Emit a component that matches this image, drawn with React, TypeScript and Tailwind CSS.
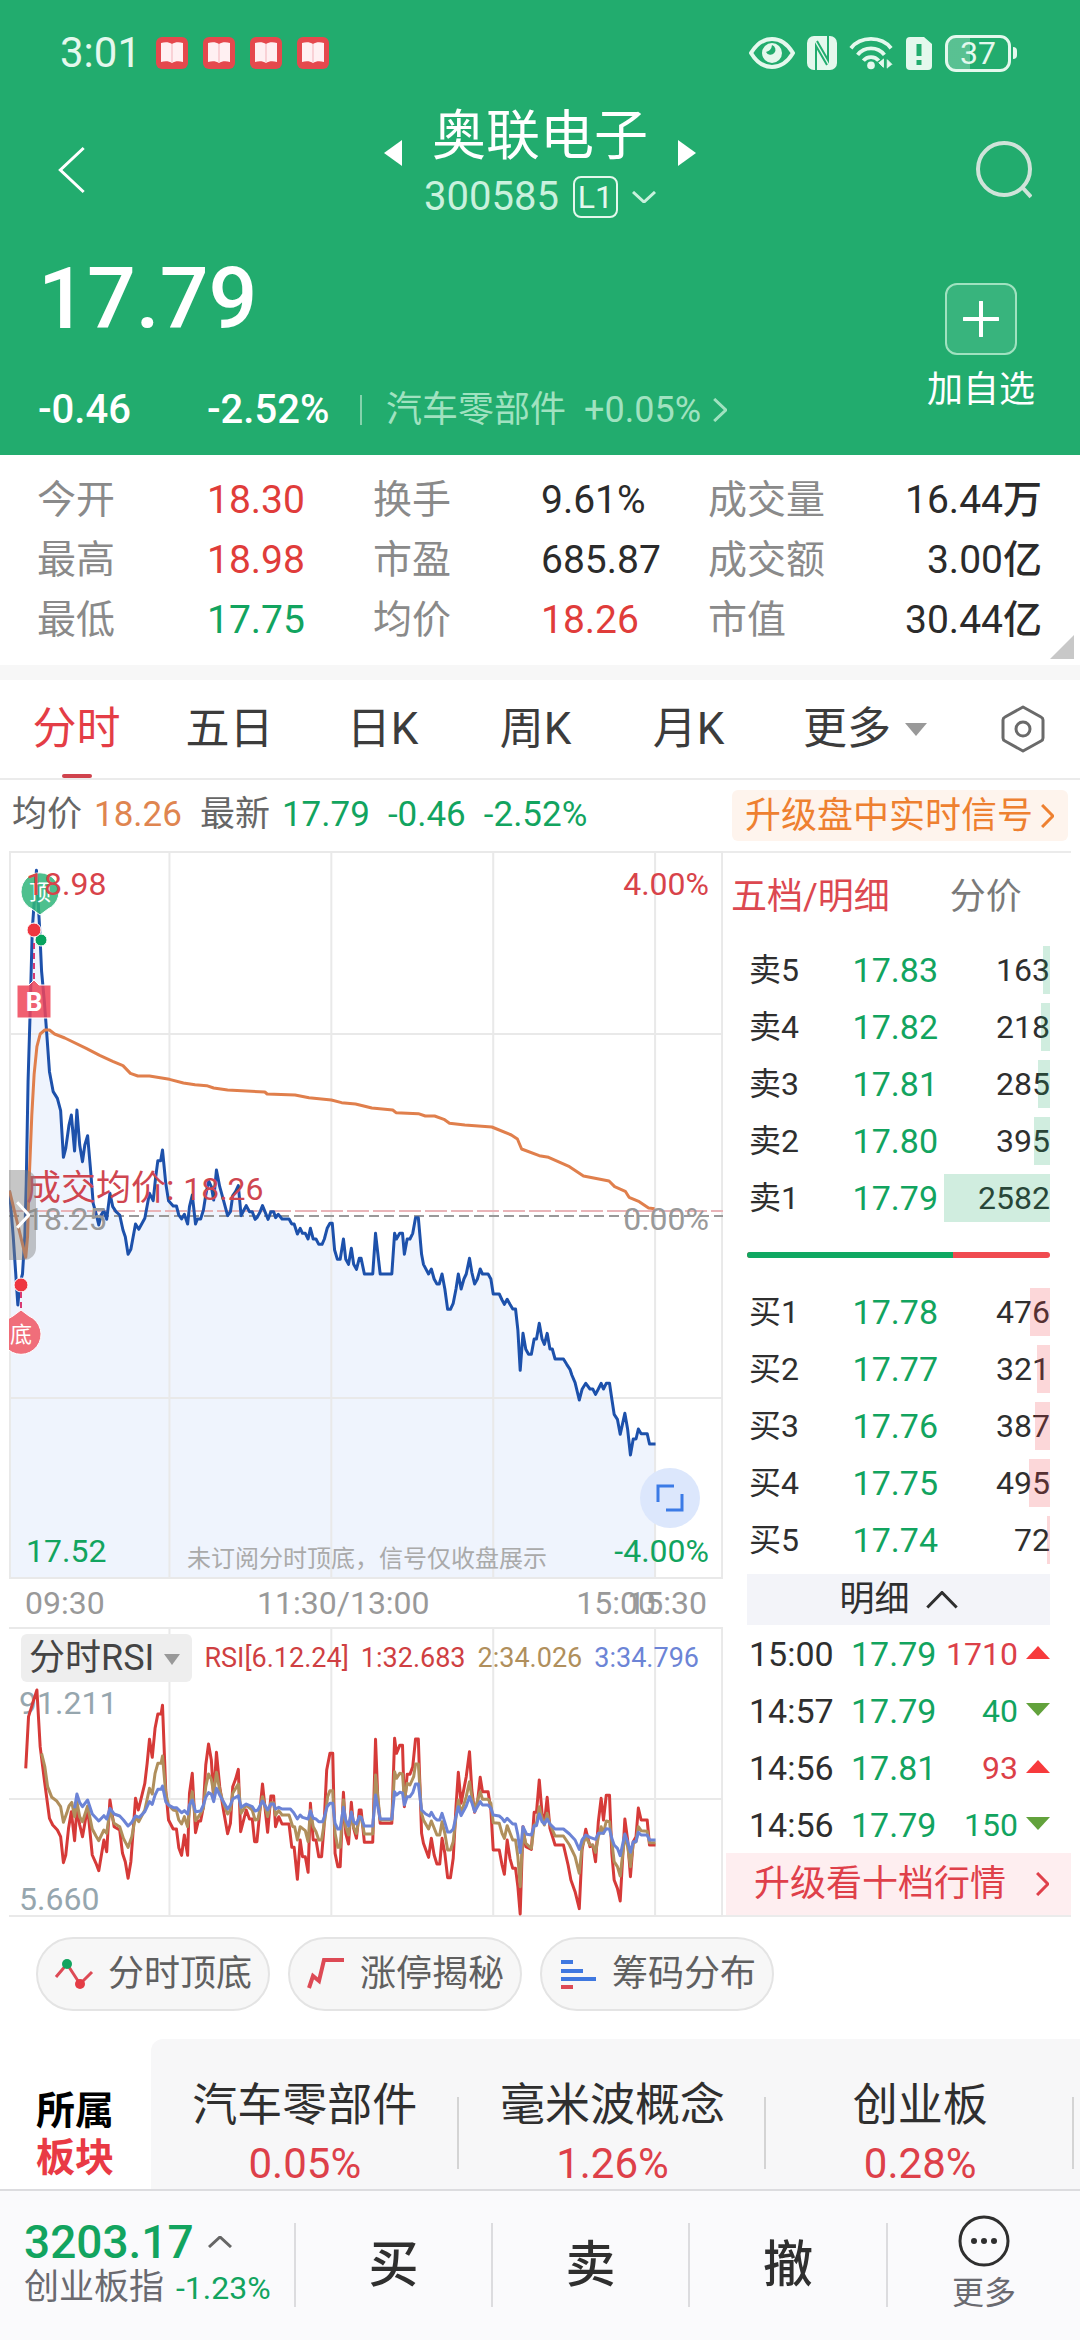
import type { ReactNode } from "react";

const PRICE =
  "21,1019 29,1155 34,1258 39,1362 43,1300 49,1269 54,1155 57,1000 61,690 65,504 70,236 79,58 86,236 90,360 96,452 101,545 107,662 115,722 124,742 131,779 137,919 142,892 149,822 154,792 161,900 166,777 172,882 178,932 183,882 189,854 196,967 201,1057 207,1087 213,1122 218,1092 224,1079 230,1105 237,1027 243,1067 250,1082 258,1092 265,1137 270,1157 276,1210 282,1195 292,1119 299,1135 312,1102 322,1027 330,1049 335,982 340,929 346,929 350,897 357,997 363,1049 373,1065 380,1065 385,1092 391,1104 397,1090 404,1119 408,1067 414,1032 421,1119 425,1104 432,1104 438,1077 443,1032 449,989 455,1007 460,1047 466,957 473,1007 480,1042 490,1094 496,1082 501,1034 507,1022 513,1004 519,1094 525,1077 530,1064 537,1082 543,1082 549,1105 553,1100 560,1082 565,1064 577,1105 583,1082 589,1082 593,1100 599,1090 607,1104 622,1104 628,1119 633,1119 640,1149 646,1132 651,1147 657,1147 663,1164 668,1132 674,1164 680,1164 686,1180 693,1180 698,1164 704,1132 710,1117 715,1117 720,1197 726,1225 732,1225 739,1164 744,1225 750,1240 756,1192 761,1240 767,1255 773,1222 777,1222 784,1269 802,1269 808,1147 818,1269 843,1269 849,1147 853,1164 860,1147 866,1147 870,1210 876,1164 882,1164 888,1147 894,1100 900,1100 907,1210 911,1240 922,1269 928,1254 934,1284 940,1299 945,1299 951,1269 957,1314 963,1375 969,1375 975,1357 981,1314 986,1269 992,1314 998,1284 1003,1269 1010,1222 1015,1264 1021,1299 1027,1284 1033,1254 1038,1269 1050,1269 1056,1284 1061,1329 1074,1329 1080,1347 1085,1360 1091,1345 1097,1360 1103,1374 1109,1374 1114,1437 1119,1558 1125,1447 1131,1495 1137,1510 1143,1510 1149,1464 1154,1464 1160,1417 1166,1464 1171,1480 1177,1447 1183,1494 1188,1494 1194,1524 1212,1524 1219,1540 1226,1555 1230,1572 1237,1595 1246,1647 1252,1615 1260,1597 1269,1614 1275,1614 1281,1630 1287,1614 1293,1597 1298,1614 1304,1597 1311,1597 1316,1644 1321,1690 1328,1705 1334,1750 1344,1687 1350,1735 1356,1812 1362,1764 1368,1764 1373,1734 1379,1748 1392,1748 1397,1779 1410,1779";

const AVERAGE =
  "21,1019 56,1219 60,1155 63,1000 69,793 74,670 80,587 87,549 97,537 107,537 118,549 140,561 186,592 215,613 243,631 265,644 281,667 297,675 322,675 365,685 395,696 420,701 445,704 460,711 490,717 570,723 575,729 635,732 665,740 713,747 735,755 765,759 800,771 845,777 852,785 900,788 915,795 935,795 955,805 967,817 1000,822 1058,828 1100,852 1113,864 1122,894 1160,914 1180,919 1225,947 1255,975 1310,990 1322,1007 1345,1021 1353,1039 1375,1052 1395,1071 1408,1073";

const RSI_6 =
  "56,445 62,290 72,245 80,210 87,380 96,480 107,595 114,615 124,630 131,650 137,728 142,705 148,625 154,575 161,662 166,565 172,615 178,650 189,562 199,705 207,730 213,752 224,660 230,695 237,540 246,620 258,630 264,700 270,725 276,775 282,725 292,535 298,570 312,490 317,430 322,358 328,412 334,325 340,282 347,282 350,256 357,510 363,600 373,627 380,627 385,683 391,706 397,645 404,706 408,520 414,460 421,638 427,603 432,603 438,560 443,435 449,372 455,420 460,535 466,397 473,500 481,570 490,641 496,610 501,500 507,478 513,448 518,635 530,570 537,597 543,597 548,665 553,665 565,492 576,637 583,528 589,528 593,620 600,590 607,612 622,612 628,682 633,682 640,778 646,660 651,710 657,710 663,757 668,550 674,660 680,660 686,710 692,710 697,625 703,450 710,400 716,400 721,700 727,740 732,740 739,517 744,640 750,672 756,547 761,625 767,655 773,570 777,570 784,667 802,667 808,358 813,540 818,610 843,610 849,355 853,400 860,376 866,376 870,560 876,463 882,463 888,440 894,357 900,357 907,640 911,670 922,712 928,655 934,705 940,732 946,732 951,655 957,700 963,773 969,773 975,715 981,560 986,457 992,550 1003,470 1010,395 1015,510 1021,577 1027,550 1033,472 1038,515 1050,515 1056,570 1061,690 1074,690 1080,735 1085,763 1091,660 1097,715 1103,745 1109,745 1114,800 1119,882 1125,620 1131,680 1143,688 1149,577 1154,577 1160,480 1166,580 1171,610 1177,532 1183,625 1194,675 1212,675 1222,735 1228,780 1237,815 1246,866 1252,690 1260,628 1269,680 1275,675 1281,725 1287,605 1293,535 1298,600 1304,526 1311,526 1316,700 1321,780 1328,805 1334,843 1344,597 1350,660 1356,770 1362,665 1368,650 1373,564 1379,600 1392,600 1397,675 1410,675";

const RSI_12 =
  "90,400 97,440 103,500 112,532 122,542 131,560 137,607 144,580 149,558 155,547 161,590 166,545 172,590 178,605 189,558 199,627 207,648 213,662 224,630 230,640 237,570 246,610 258,620 266,655 276,682 284,650 292,590 299,605 312,570 322,505 328,522 334,460 340,430 347,430 350,408 357,520 363,555 373,570 380,572 385,600 391,612 397,590 404,620 410,545 414,515 421,602 430,585 438,565 443,500 449,462 455,478 460,520 466,457 473,510 481,550 490,582 496,570 501,520 513,492 519,580 530,555 543,570 549,600 555,598 565,530 576,590 583,548 589,548 593,585 600,572 607,585 622,585 630,620 634,620 640,660 646,620 657,632 663,665 668,570 674,620 680,635 686,660 692,660 700,590 705,530 710,512 716,512 721,640 727,682 732,682 739,540 744,620 750,645 756,575 761,622 767,640 773,590 777,590 784,642 802,642 808,465 818,600 843,600 849,455 853,475 860,460 866,462 870,540 876,490 882,495 890,470 894,432 900,432 907,580 911,600 922,627 928,603 940,645 946,645 951,605 957,640 963,690 969,690 975,665 981,590 986,540 992,580 1003,530 1010,485 1015,530 1021,570 1033,515 1038,538 1050,538 1056,550 1061,608 1074,610 1080,640 1085,655 1091,617 1103,660 1109,660 1114,710 1119,800 1125,632 1131,670 1143,685 1149,615 1154,610 1160,560 1166,595 1171,615 1177,580 1183,612 1194,648 1212,648 1225,675 1237,710 1246,760 1252,680 1260,650 1269,675 1275,675 1281,697 1287,650 1293,620 1298,640 1304,603 1311,605 1316,665 1321,725 1328,740 1334,768 1344,645 1350,680 1356,740 1362,670 1368,665 1373,620 1379,632 1392,634 1397,668 1410,668";

const RSI_24 =
  "161,565 166,522 172,548 178,560 189,540 199,582 213,603 224,587 230,597 237,565 246,582 258,588 266,600 276,618 284,607 292,588 300,592 312,575 322,545 328,553 334,525 340,508 347,508 350,498 357,545 363,555 373,563 380,563 391,578 397,572 404,582 408,555 414,540 421,575 432,573 438,555 443,532 449,518 455,522 460,545 466,505 473,525 481,545 490,567 496,555 501,537 513,527 519,562 530,552 543,560 549,573 555,570 565,543 576,570 583,552 589,552 593,567 600,562 607,567 625,567 632,578 640,597 646,585 651,592 663,597 668,573 674,595 680,597 686,605 694,605 698,590 704,560 710,550 716,550 721,610 727,627 732,627 739,562 744,600 750,618 756,577 761,605 767,612 773,590 777,592 784,618 802,618 808,525 813,560 818,597 843,597 849,515 853,525 860,517 866,519 870,555 876,530 882,530 888,518 894,492 900,492 907,570 916,582 924,588 928,577 934,592 940,600 946,600 951,580 957,607 963,636 969,636 975,627 981,590 986,560 992,587 1003,558 1010,530 1015,548 1021,575 1033,545 1038,555 1050,555 1056,565 1061,585 1074,588 1080,595 1085,605 1091,595 1103,612 1109,612 1114,645 1119,698 1125,620 1133,643 1143,645 1149,617 1154,617 1160,582 1166,605 1171,612 1177,597 1183,612 1194,627 1212,627 1225,642 1237,660 1246,688 1252,660 1260,645 1269,652 1281,658 1287,640 1298,640 1304,626 1311,628 1316,655 1321,675 1328,685 1334,707 1344,642 1350,665 1356,697 1362,665 1368,665 1373,637 1379,645 1392,645 1397,660 1410,660";

const STATS = [
  ["今开", "18.30", "text-[#e03c3a]", "换手", "9.61%", "text-[#2b2b2b]", "成交量", "16.44万"],
  ["最高", "18.98", "text-[#e03c3a]", "市盈", "685.87", "text-[#2b2b2b]", "成交额", "3.00亿"],
  ["最低", "17.75", "text-[#12a45f]", "均价", "18.26", "text-[#e03c3a]", "市值", "30.44亿"],
];

const TABS = ["分时", "五日", "日K", "周K", "月K"];

const SELLS = [
  { label: "卖5", price: "17.83", volume: 163, bar: 7 },
  { label: "卖4", price: "17.82", volume: 218, bar: 9 },
  { label: "卖3", price: "17.81", volume: 285, bar: 12 },
  { label: "卖2", price: "17.80", volume: 395, bar: 16 },
  { label: "卖1", price: "17.79", volume: 2582, bar: 106 },
];

const BUYS = [
  { label: "买1", price: "17.78", volume: 476, bar: 20 },
  { label: "买2", price: "17.77", volume: 321, bar: 13 },
  { label: "买3", price: "17.76", volume: 387, bar: 15 },
  { label: "买4", price: "17.75", volume: 495, bar: 21 },
  { label: "买5", price: "17.74", volume: 72, bar: 3 },
];

const TRADES = [
  { time: "15:00", price: "17.79", volume: 1710, up: true },
  { time: "14:57", price: "17.79", volume: 40, up: false },
  { time: "14:56", price: "17.81", volume: 93, up: true },
  { time: "14:56", price: "17.79", volume: 150, up: false },
];

const SECTORS = [
  { name: "汽车零部件", change: "0.05%" },
  { name: "毫米波概念", change: "1.26%" },
  { name: "创业板", change: "0.28%" },
];

function Chevron({ d, className }: { d: string; className: string }) {
  return (
    <svg viewBox="0 0 24 24" preserveAspectRatio="none" fill="none" stroke="currentColor" className={className} aria-hidden="true">
      <path d={d} strokeWidth="3" vectorEffect="non-scaling-stroke" />
    </svg>
  );
}

const RIGHT = "M2 1l20 11L2 23";
const LEFT = "M22 1L2 12l20 11";
const UP = "M1 22L12 2l11 20";
const DOWN = "M1 2l11 20L23 2";

function BookIcon() {
  return (
    <svg viewBox="0 0 32 32" className="h-8 w-8" aria-hidden="true">
      <rect width="32" height="32" rx="6" fill="#e5484d" />
      <path d="M5 6c4-1 8-1 11 1 3-2 7-2 11-1v19c-4-1-8-1-11 1-3-2-7-2-11-1z" fill="#fff0f2" />
      <path d="M16 7v18" stroke="#f3b3ba" strokeWidth="1" />
    </svg>
  );
}

function StatusBar() {
  return (
    <div className="flex h-[106px] items-center justify-between pr-[63px] pl-[60px] text-[#e4f8ed]">
      <div className="flex items-center gap-[15px]">
        <span className="text-[42px] leading-none">3:01</span>
        <BookIcon />
        <BookIcon />
        <BookIcon />
        <BookIcon />
      </div>
      <div className="flex items-center gap-3">
        <svg viewBox="0 0 46 34" className="h-[34px] w-[46px]" aria-hidden="true">
          <path d="M2 17C8 7 15 3 23 3s15 4 21 14c-6 10-13 14-21 14S8 27 2 17z" fill="none" stroke="currentColor" strokeWidth="4" />
          <circle cx="23" cy="17" r="10" fill="currentColor" />
          <path d="M23 9a5 5 0 1 1-6 7 8 8 0 0 0 6-7z" fill="#22ac6e" />
        </svg>
        <svg viewBox="0 0 30 34" className="h-[34px] w-[30px]" aria-hidden="true">
          <rect width="30" height="34" rx="7" fill="currentColor" />
          <path d="M9 34V10l11 19M21 0v24L10 5" fill="none" stroke="#22ac6e" strokeWidth="2" />
        </svg>
        <svg viewBox="0 0 46 34" className="h-[34px] w-[44px]" aria-hidden="true">
          <g fill="none" stroke="currentColor" strokeWidth="4">
            <path d="M2 12C12-1 34-1 44 12" />
            <path d="M9 19c7-9 21-9 28 0" />
            <path d="M15 25c4-5 12-5 16 0" />
          </g>
          <circle cx="23" cy="30" r="4" fill="currentColor" />
          <path d="M36 23v9l-5-5M40 33v-9l5 5" fill="currentColor" stroke="currentColor" />
        </svg>
        <svg viewBox="0 0 28 34" className="h-[34px] w-[28px]" aria-hidden="true">
          <path d="M5 1h14l8 7v22q0 4-4 4H5q-4 0-4-4V5q0-4 4-4z" fill="currentColor" />
          <path d="M14 8v12M14 24v5" stroke="#22ac6e" strokeWidth="5" />
        </svg>
        <div className="flex items-center gap-[2px]">
          <span className="flex h-[37px] w-[66px] items-center justify-center rounded-[11px] border-3 border-current bg-linear-to-r from-white/25 from-37% to-transparent to-37% text-[32px] leading-none">
            37
          </span>
          <span className="h-3 w-1 rounded-r bg-current" />
        </div>
      </div>
    </div>
  );
}

function Header() {
  return (
    <header className="bg-[#22ac6e] text-white">
      <StatusBar />
      <div className="flex h-[128px] items-center justify-between pr-12 pl-[58px]">
        <button type="button" aria-label="返回" className="w-[46px]">
          <Chevron d={LEFT} className="h-12 w-7" />
        </button>
        <div className="flex items-start gap-5 self-stretch">
          <button type="button" aria-label="上一只" className="mt-[34px]">
            <svg viewBox="0 0 18 26" className="h-[26px] w-[18px]" fill="currentColor"><path d="M18 0v26L0 13z" /></svg>
          </button>
          <div className="flex w-[236px] flex-col items-center">
            <h1 className="text-[54px] leading-[62px] whitespace-nowrap">奥联电子</h1>
            <div className="flex h-[58px] items-center gap-[14px] text-[#c9f1dd]">
              <span className="text-[40px] leading-none">300585</span>
              <span className="flex h-[42px] w-[45px] items-center justify-center rounded-lg border-2 border-[#e4f8ed] text-[32px] leading-none text-[#e4f8ed]">L1</span>
              <Chevron d={DOWN} className="h-3 w-6" />
            </div>
          </div>
          <button type="button" aria-label="下一只" className="mt-[34px]">
            <svg viewBox="0 0 18 26" className="h-[26px] w-[18px]" fill="currentColor"><path d="M0 0v26l18-13z" /></svg>
          </button>
        </div>
        <button type="button" aria-label="搜索">
          <svg viewBox="0 0 56 58" className="h-[58px] w-[56px]" fill="none" stroke="#cfe3d9" strokeWidth="4" aria-hidden="true">
            <circle cx="28" cy="28" r="26" />
            <path d="M46 46l9 10" />
          </svg>
        </button>
      </div>
      <div className="flex items-start justify-between pr-[45px] pb-[21px] pl-[38px]">
        <div className="pt-5">
          <div className="text-[86px] leading-[90px] font-medium">17.79</div>
          <div className="mt-[42px] flex h-12 items-center text-[40px] leading-[48px] font-medium">
            <span className="w-[169px]">-0.46</span>
            <span className="w-[153px]">-2.52%</span>
            <span className="h-[30px] w-[2px] bg-[#85d3ac]" />
            <a href="#sector" className="ml-6 flex items-center text-[36px] font-normal text-[#a0e2c0]">
              <span>汽车零部件</span>
              <span className="mr-3 ml-[18px]">+0.05%</span>
              <Chevron d={RIGHT} className="h-6 w-[14px]" />
            </a>
          </div>
        </div>
        <button type="button" className="flex flex-col items-center pt-[49px]">
          <span className="flex h-[72px] w-[72px] items-center justify-center rounded-xl border-2 border-[#a0e2c0] bg-white/10">
            <svg viewBox="0 0 36 36" className="h-9 w-9" stroke="currentColor" strokeWidth="4" strokeLinecap="round"><path d="M18 1v34M1 18h34" /></svg>
          </span>
          <span className="mt-[11px] text-[36px] leading-[48px]">加自选</span>
        </button>
      </div>
    </header>
  );
}

function Stats() {
  return (
    <section className="relative bg-white py-[15px] pr-[38px] pl-[37px]">
      <dl className="grid grid-cols-[170px_166px_168px_167px_auto_1fr] text-[39px] leading-[60px] whitespace-nowrap">
        {STATS.map(([a, av, ac, b, bv, bc, c, cv]) => (
          <div key={a} className="contents">
            <dt className="text-[#8a8a8a]">{a}</dt>
            <dd className={"font-[450] " + ac}>{av}</dd>
            <dt className="text-[#8a8a8a]">{b}</dt>
            <dd className={"font-[450] " + bc}>{bv}</dd>
            <dt className="text-[#8a8a8a]">{c}</dt>
            <dd className="text-right font-[450] text-[#2b2b2b]">{cv}</dd>
          </div>
        ))}
      </dl>
      <svg viewBox="0 0 24 24" className="absolute right-[6px] bottom-[6px] h-6 w-6" fill="#c8c8c8" aria-hidden="true"><path d="M24 0v24H0z" /></svg>
    </section>
  );
}

function Tabs() {
  return (
    <nav className="grid h-[100px] grid-cols-[repeat(5,153fr)_200fr_115fr] border-b-2 border-[#ebebeb] text-[44px] text-[#3c3c3c]">
      {TABS.map((tab, i) => (
        <button key={tab} type="button" className={"relative " + (i === 0 ? "text-[#e43d46]" : "")}>
          {tab}
          {i === 0 && <span className="absolute bottom-0 left-1/2 h-[4px] w-[30px] -translate-x-1/2 rounded bg-[#d0434d]" />}
        </button>
      ))}
      <button type="button" className="flex items-center justify-center gap-[14px]">
        更多
        <svg viewBox="0 0 22 13" className="h-[13px] w-[22px]" fill="#999"><path d="M0 0h22L11 13z" /></svg>
      </button>
      <button type="button" aria-label="设置" className="flex items-center justify-center">
        <svg viewBox="0 0 44 48" className="h-12 w-11" fill="none" stroke="#6a6a6a" strokeWidth="3" strokeLinejoin="round">
          <path d="M22 2l18 10q2 1 2 3v18q0 2-2 3L22 46 4 36q-2-1-2-3V15q0-2 2-3z" />
          <circle cx="22" cy="24" r="7" />
        </svg>
      </button>
    </nav>
  );
}

function InfoRow() {
  return (
    <div className="flex h-[71px] items-center justify-between pr-3 pl-3 text-[35px] whitespace-nowrap">
      <div className="flex items-center text-[#666]">
        <span>均价</span>
        <span className="ml-3 font-[450] text-[#df8550]">18.26</span>
        <span className="ml-[18px]">最新</span>
        <span className="ml-3 font-[450] text-[#12a45f]">17.79</span>
        <span className="ml-[18px] font-[450] text-[#12a45f]">-0.46</span>
        <span className="ml-[18px] font-[450] text-[#12a45f]">-2.52%</span>
      </div>
      <a href="#signal" className="flex h-[51px] items-center gap-2 rounded-md bg-[#fef4ed] pr-[14px] pl-[13px] text-[36px] leading-none text-[#ee8030]">
        升级盘中实时信号
        <Chevron d={RIGHT} className="h-6 w-[13px]" />
      </a>
    </div>
  );
}

function Line({ points, stroke }: { points: string; stroke: string }) {
  return (
    <polyline points={points} fill="none" stroke={stroke} strokeWidth="3" strokeLinejoin="round" vectorEffect="non-scaling-stroke" />
  );
}

function Grid({ d }: { d: string }) {
  return <path d={d} fill="none" stroke="#e9e9e9" strokeWidth="2" vectorEffect="non-scaling-stroke" />;
}

function Markers() {
  return (
    <svg className="absolute inset-0 h-full w-full" aria-hidden="true">
      <g stroke="#fff" strokeWidth="1">
        <path d="M31 64l-8-6a19 19 0 1 1 16 0z" fill="#2fb57a" fillOpacity="0.850" />
        <circle cx="32" cy="89" r="6" fill="#07a35e" />
        <circle cx="25" cy="79" r="7" fill="#ee3640" />
        <path d="M8 134h12l5-5 5 5h12v33H8z" fill="#ef4458" fillOpacity="0.850" />
        <circle cx="12" cy="434" r="7" fill="#ee3640" />
        <path d="M12 459l8 6a20 20 0 1 1-16 0z" fill="#ef5f6b" fillOpacity="0.900" />
      </g>
      <path d="M25 92v36M12 441v16" stroke="#d83a72" strokeWidth="2" strokeDasharray="6 4" />
      <g fill="#fff" textAnchor="middle" className="font-[Roboto,'Noto_Sans_CJK_SC',sans-serif]">
        <text x="31" y="49" fontSize="22">顶</text>
        <text x="25" y="160" fontSize="26" fontWeight="700">B</text>
        <text x="12" y="491" fontSize="22">底</text>
      </g>
    </svg>
  );
}

function PriceChart() {
  return (
    <div className="relative h-[728px] text-[32px] leading-[36px]">
      <svg viewBox="20 0 1535 2184" preserveAspectRatio="none" className="absolute inset-0 h-full w-full" aria-hidden="true">
        <polygon points={"21,2184 " + PRICE + " 1410,2184"} fill="#eff4fd" />
        <Grid d="M22 0V2184M365 0V2184M713 0V2184M1061 0V2184M1409 0V2184M1553 0V2184M20 3H1555M20 549H1555M20 1641H1555M20 2181H1555" />
        <path d="M20 1080H1555" stroke="#e8b4b8" strokeWidth="2" strokeDasharray="22 4" vectorEffect="non-scaling-stroke" />
        <path d="M20 1095H1555" stroke="#999" strokeWidth="2" strokeDasharray="10 5" vectorEffect="non-scaling-stroke" />
        <Line points={PRICE} stroke="#1d51ab" />
        <Line points={AVERAGE} stroke="#e07f4c" />
      </svg>
      <Markers />
      <span className="absolute top-[15px] left-[17px] font-[450] text-[#d8434a]">18.98</span>
      <span className="absolute top-[15px] right-[14px] font-[450] text-[#d8434a]">4.00%</span>
      <span className="absolute top-[320px] left-[17px] text-[35px] text-[#cf4650]">
        成交均价: <span className="text-[32px]">18.26</span>
      </span>
      <span className="absolute top-[350px] left-[17px] text-[#999]">18.25</span>
      <span className="absolute top-[350px] right-[14px] text-[#999]">0.00%</span>
      <span className="absolute bottom-[10px] left-[17px] font-[450] text-[#12a45f]">17.52</span>
      <span className="absolute right-[14px] bottom-[10px] font-[450] text-[#12a45f]">-4.00%</span>
      <span className="absolute bottom-[2px] left-[178px] text-[24px] whitespace-nowrap text-[#aaa]">未订阅分时顶底，信号仅收盘展示</span>
      <button type="button" aria-label="展开" className="absolute top-[319px] left-0 flex h-[90px] w-[27px] items-center justify-center rounded-r-xl bg-[#808080]/45 text-white">
        <Chevron d={RIGHT} className="h-7 w-[14px]" />
      </button>
      <button type="button" aria-label="全屏" className="absolute right-[23px] bottom-[51px] flex h-[60px] w-[60px] items-center justify-center rounded-full bg-[#dce7fc]">
        <svg viewBox="0 0 28 28" className="h-7 w-7" fill="none" stroke="#3b7be6" strokeWidth="3"><path d="M2 18V2h16M26 10v16H10" /></svg>
      </button>
    </div>
  );
}

function TimeAxis() {
  return (
    <div className="relative flex h-[48px] items-center justify-between pr-4 pl-4 text-[32px] leading-none text-[#999]">
      <span>09:30</span>
      <span className="absolute left-[248px]">11:30/13:00</span>
      <span className="absolute right-[67px]">15:00</span>
      <span>15:30</span>
    </div>
  );
}

function RsiChart() {
  return (
    <div className="relative h-[290px] text-[32px] leading-[36px] text-[#96a6ae]">
      <span className="absolute top-[58px] left-[10px]">91.211</span>
      <span className="absolute bottom-0 left-[10px]">5.660</span>
      <svg viewBox="20 21 1535 870" preserveAspectRatio="none" className="absolute inset-0 h-full w-full" aria-hidden="true">
        <Grid d="M365 24V891M713 24V891M1061 24V891M1409 24V891M1553 24V891M20 24H1555M20 537H1555M20 888H1555" />
        <Line points={RSI_6} stroke="#d63a38" />
        <Line points={RSI_12} stroke="#b08f5c" />
        <Line points={RSI_24} stroke="#6c84d6" />
      </svg>
      <div className="absolute top-[7px] left-3 flex items-center">
        <span className="relative">
          <select aria-label="指标" className="h-12 w-[171px] appearance-none rounded-md bg-[#eee] pl-2 text-[36px] leading-[48px] text-[#444]">
            <option>分时RSI</option>
          </select>
          <svg viewBox="0 0 16 11" className="pointer-events-none absolute top-5 right-3 h-[11px] w-4" fill="#999"><path d="M0 0h16L8 11z" /></svg>
        </span>
      </div>
      <div className="absolute top-[13px] right-6 flex gap-3 text-[27px] whitespace-nowrap">
        <span className="text-[#cf3f42]">RSI[6.12.24]</span>
        <span className="text-[#cf3f42]">1:32.683</span>
        <span className="text-[#b08f5c]">2:34.026</span>
        <span className="text-[#6c84d6]">3:34.796</span>
      </div>
    </div>
  );
}

function OrderRows({ rows, bar, label }: { rows: typeof SELLS; bar: string; label: string }) {
  return (
    <table aria-label={label} className="w-full table-fixed">
      <tbody>
        {rows.map((row) => (
          <tr key={row.label} className="h-[57px] text-[32px] leading-none text-[#2f2f2f]">
            <td className="w-[90px] pl-[2px]">{row.label}</td>
            <td className="w-[101px] text-right text-[34px] font-[450] text-[#12a45f]">{row.price}</td>
            <td className="relative text-right">
              {row.volume}
              <span className={"absolute top-[5px] right-0 h-12 " + bar} style={{ width: row.bar }} />
            </td>
          </tr>
        ))}
      </tbody>
    </table>
  );
}

function Arrow({ up }: { up: boolean }) {
  return (
    <svg viewBox="0 0 24 13" className="ml-2 inline h-[13px] w-6 align-[6px]" fill={up ? "#f73a3c" : "#62a23c"} aria-hidden="true">
      <path d={up ? "M0 13h24L12 0z" : "M0 0h24L12 13z"} />
    </svg>
  );
}

function Section({ children }: { children: ReactNode }) {
  return <div className="pr-[21px] pl-6">{children}</div>;
}

function OrderBook() {
  return (
    <aside className="w-[348px] shrink-0 border-y-2 border-[#ebebeb]">
      <div className="flex h-[88px] items-center gap-[60px] pl-2 text-[36px]">
        <button type="button" className="text-[#dc4850]">五档/明细</button>
        <button type="button" className="text-[#7a7a7a]">分价</button>
      </div>
      <Section>
        <OrderRows rows={SELLS} bar="bg-[#12a45f]/20" label="卖盘" />
        <div className="flex h-[57px] items-center">
          <div className="flex h-[6px] w-full overflow-hidden rounded-full bg-[#f04b50]">
            <div className="w-[68%] bg-[#0fa862]" />
          </div>
        </div>
        <OrderRows rows={BUYS} bar="bg-[#ee3640]/20" label="买盘" />
        <button type="button" className="mt-[6px] flex h-[51px] w-full items-center justify-center gap-4 bg-[#f3f4f9] text-[35px] leading-none text-[#2f2f2f]">
          明细
          <Chevron d={UP} className="h-[18px] w-8" />
        </button>
        <table aria-label="成交明细" className="w-full table-fixed">
          <tbody>
            {TRADES.map((t, i) => (
              <tr key={i} className="h-[57px] text-[34px] leading-none font-[450] whitespace-nowrap">
                <td className="w-[104px] pl-[2px] text-[#2f2f2f]">{t.time}</td>
                <td className="w-[86px] text-[#12a45f]">{t.price}</td>
                <td className={"text-right text-[32px] " + (t.up ? "text-[#dc4048]" : "text-[#12a45f]")}>
                  {t.volume}
                  <Arrow up={t.up} />
                </td>
              </tr>
            ))}
          </tbody>
        </table>
      </Section>
      <a href="#level2" className="ml-[3px] flex h-[62px] items-center justify-between bg-[#feeef0] pr-[22px] pl-7 text-[36px] text-[#df404a]">
        升级看十档行情
        <Chevron d={RIGHT} className="h-6 w-[13px]" />
      </a>
    </aside>
  );
}

function Chip({ label, children }: { label: string; children: ReactNode }) {
  return (
    <button type="button" className="flex h-[74px] items-center gap-[14px] rounded-full border-2 border-[#e4e4e4] bg-[#f7f7f7] px-4 text-[36px] text-[#606060]">
      <svg viewBox="0 0 40 32" className="h-8 w-10" fill="none" aria-hidden="true">{children}</svg>
      {label}
    </button>
  );
}

function Chips() {
  return (
    <div className="flex gap-[18px] px-9 pt-5 pb-7">
      <Chip label="分时顶底">
        <path d="M2 19L13 6l13 20 12-12" stroke="#dd4a55" strokeWidth="3" />
        <circle cx="13" cy="6" r="5" fill="#12a45f" />
        <circle cx="26" cy="26" r="5" fill="#e43d46" />
      </Chip>
      <Chip label="涨停揭秘">
        <path d="M3 30l4-12 6 5 5-21h20" stroke="#dd4a55" strokeWidth="4" />
      </Chip>
      <Chip label="筹码分布">
        <path d="M3 4h12M3 13h22M3 21h35" stroke="#3f78e0" strokeWidth="4" />
        <path d="M3 29h12" stroke="#dd4a55" strokeWidth="4" />
      </Chip>
    </div>
  );
}

function Sectors() {
  return (
    <section className="flex grow">
      <h2 className="w-[151px] shrink-0 pt-[49px] pl-9 text-[39px] leading-[47px] font-bold text-black">
        所属
        <br />
        <span className="text-[#e93a45]">板块</span>
      </h2>
      <ul className="flex grow rounded-tl-xl bg-[#f7f7f8] pt-[41px] pr-[6px]">
        {SECTORS.map((s) => (
          <li key={s.name} className="relative flex-1 text-center">
            <p className="text-[45px] leading-[52px] text-[#2f2f2f]">{s.name}</p>
            <p className="pt-2 text-[42px] leading-[48px] font-[450] text-[#dd4049]">{s.change}</p>
            <span className="absolute top-[17px] right-0 h-[72px] w-[2px] bg-[#d4d4d4]" />
          </li>
        ))}
      </ul>
    </section>
  );
}

function BottomBar() {
  return (
    <footer className="sticky bottom-0 grid h-[151px] grid-cols-[294fr_197fr_197fr_198fr_194fr] border-t-2 border-[#dcdcdf] bg-[#fafafc] text-[50px] text-[#2f2f2f]">
      <button type="button" className="flex flex-col items-start pt-[22px] pl-6 whitespace-nowrap">
        <span className="flex items-center gap-[14px] text-[46px] leading-[58px] font-medium text-[#12a45f]">
          3203.17
          <Chevron d={UP} className="h-3 w-6 text-[#666]" />
        </span>
        <span className="flex items-center gap-3 text-[35px] leading-[34px] text-[#6a6a70]">
          创业板指
          <span className="text-[32px] font-[450] text-[#12a45f]">-1.23%</span>
        </span>
      </button>
      {["买", "卖", "撤"].map((action) => (
        <div key={action} className="flex pt-8">
          <span className="h-[84px] w-[2px] bg-[#dcdcdf]" />
          <button type="button" className="h-[84px] grow font-medium">{action}</button>
        </div>
      ))}
      <div className="flex pt-8">
        <span className="h-[84px] w-[2px] bg-[#dcdcdf]" />
        <button type="button" className="-mt-2 flex grow flex-col items-center text-[32px] text-[#6a6a70]">
          <svg viewBox="0 0 52 52" className="h-[52px] w-[52px]" aria-hidden="true">
            <circle cx="26" cy="26" r="24" fill="none" stroke="#2f2f2f" strokeWidth="3" />
            <path d="M16 26h.01M26 26h.01M36 26h.01" stroke="#2f2f2f" strokeWidth="6" strokeLinecap="round" />
          </svg>
          <span className="mt-2 leading-9">更多</span>
        </button>
      </div>
    </footer>
  );
}

export default function App() {
  return (
    <div className="flex min-h-screen flex-col overflow-x-clip bg-white font-[Roboto,'Noto_Sans_CJK_SC',sans-serif]">
      <Header />
      <Stats />
      <div className="h-[15px] bg-[#f7f7f7]" />
      <Tabs />
      <InfoRow />
      <main className="mx-[9px] flex">
        <div className="min-w-0 grow">
          <PriceChart />
          <TimeAxis />
          <RsiChart />
        </div>
        <OrderBook />
      </main>
      <Chips />
      <Sectors />
      <BottomBar />
    </div>
  );
}
